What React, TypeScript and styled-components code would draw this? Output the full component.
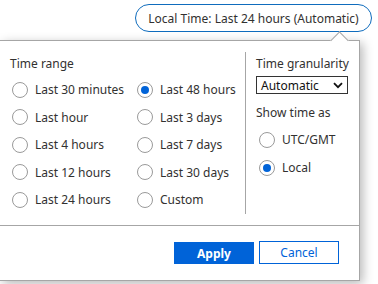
import React, { useState } from "react";
import styled, { createGlobalStyle } from "styled-components";

const Global = createGlobalStyle`
  html, body { margin: 0; padding: 0; background: #fff; overflow: hidden; }
  body { font-family: "Noto Sans", "Open Sans", sans-serif; color: #323130; }
  * { box-sizing: border-box; }
`;

const Page = styled.div`
  width: 378px;
  height: 284px;
  position: relative;
`;

const Header = styled.div`
  height: 40px;
  display: flex;
  justify-content: flex-end;
  align-items: flex-start;
  padding: 4px 6px 0 0;
`;

const Pill = styled.button`
  height: 28px;
  width: 237px;
  border: 1px solid #0f6cbd;
  border-radius: 14px;
  background: #fff;
  font-family: inherit;
  font-size: 12px;
  color: #323130;
  padding: 0;
  display: flex;
  align-items: center;
  justify-content: center;
`;

const Panel = styled.div`
  position: relative;
  width: 360px;
  height: 241px;
  border: 1px solid #a6a6a6;
  border-left: none;
  background: #fff;
  box-shadow: 3px 3px 10px rgba(0, 0, 0, 0.28);
  display: flex;
  flex-direction: column;
`;

const Notch = styled.div`
  position: absolute;
  top: -7px;
  left: 333px;
  width: 13px;
  height: 13px;
  background: #fff;
  border-left: 1px solid #a6a6a6;
  border-top: 1px solid #a6a6a6;
  transform: rotate(45deg);
`;

const Body = styled.div`
  height: 184px;
  display: flex;
`;

const LeftCol = styled.div`
  width: 245px;
  padding: 14px 0 0 10px;
`;

const VDivider = styled.div`
  width: 1px;
  background: #a6a6a6;
  margin: 11px 0;
`;

const RightCol = styled.div`
  flex: 1;
  padding: 14px 0 0 10px;
  display: flex;
  flex-direction: column;
`;

const Heading = styled.div`
  font-size: 12px;
  line-height: 18px;
  height: 18px;
`;

const RadioGrid = styled.div`
  margin-top: 2.75px;
  display: grid;
  grid-template-columns: 125px 1fr;
  grid-auto-rows: 27.5px;
`;

const RadioRow = styled.label<{ $indent?: number }>`
  display: flex;
  align-items: center;
  gap: 7px;
  padding-left: ${(p) => p.$indent ?? 2}px;
  font-size: 12px;
  cursor: pointer;
  white-space: nowrap;
`;

const Circle = styled.span<{ $on: boolean }>`
  width: 16px;
  height: 16px;
  flex: none;
  border-radius: 50%;
  border: 1px solid #9a9a9a;
  display: flex;
  align-items: center;
  justify-content: center;
  &::after {
    content: "";
    width: 8px;
    height: 8px;
    border-radius: 50%;
    background: ${(p) => (p.$on ? "#0063d8" : "transparent")};
  }
`;

const Select = styled.div`
  margin-top: 3px;
  width: 92px;
  height: 18px;
  border: 1px solid #333;
  display: flex;
  align-items: center;
  justify-content: space-between;
  padding: 0 4px 0 4px;
  font-size: 12px;
  color: #111;
`;

const SubHeading = styled(Heading)`
  margin-top: 10px;
`;

const SideRadios = styled.div`
  margin-top: 3.5px;
  display: grid;
  grid-auto-rows: 28px;
`;

const Footer = styled.div`
  flex: 1;
  border-top: 1px solid #a6a6a6;
  display: flex;
  justify-content: flex-end;
  align-items: flex-start;
  gap: 5px;
  padding: 15px 20px 0 0;
`;

const Button = styled.button<{ $primary?: boolean }>`
  width: 80px;
  font-family: inherit;
  font-size: 12px;
  font-weight: ${(p) => (p.$primary ? 700 : 400)};
  border: 1px solid #0063d8;
  background: ${(p) => (p.$primary ? "#0063d8" : "#fff")};
  color: ${(p) => (p.$primary ? "#fff" : "#0063d8")};
  padding: 0;
  margin-top: ${(p) => (p.$primary ? 1 : 0)}px;
  height: ${(p) => (p.$primary ? 22 : 23)}px;
`;

const ranges = [
  ["Last 30 minutes", "Last 48 hours"],
  ["Last hour", "Last 3 days"],
  ["Last 4 hours", "Last 7 days"],
  ["Last 12 hours", "Last 30 days"],
  ["Last 24 hours", "Custom"],
];

export default function App() {
  const [range, setRange] = useState("Last 48 hours");
  const [tz, setTz] = useState("Local");
  const flat = ranges.flat();
  return (
    <Page>
      <Global />
      <Header>
        <Pill>Local Time: Last 24 hours (Automatic)</Pill>
      </Header>
      <Panel>
        <Notch />
        <Body>
          <LeftCol>
            <Heading>Time range</Heading>
            <RadioGrid>
              {flat.map((r) => (
                <RadioRow key={r} onClick={() => setRange(r)}>
                  <Circle $on={range === r} />
                  {r}
                </RadioRow>
              ))}
            </RadioGrid>
          </LeftCol>
          <VDivider />
          <RightCol>
            <Heading>Time granularity</Heading>
            <Select>
              Automatic
              <svg width="10" height="7" viewBox="0 0 10 7">
                <path d="M1 1.2 L5 5.2 L9 1.2" fill="none" stroke="#111" strokeWidth="1.8" />
              </svg>
            </Select>
            <SubHeading>Show time as</SubHeading>
            <SideRadios>
              {["UTC/GMT", "Local"].map((t) => (
                <RadioRow key={t} $indent={3} onClick={() => setTz(t)}>
                  <Circle $on={tz === t} />
                  {t}
                </RadioRow>
              ))}
            </SideRadios>
          </RightCol>
        </Body>
        <Footer>
          <Button $primary>Apply</Button>
          <Button>Cancel</Button>
        </Footer>
      </Panel>
    </Page>
  );
}
